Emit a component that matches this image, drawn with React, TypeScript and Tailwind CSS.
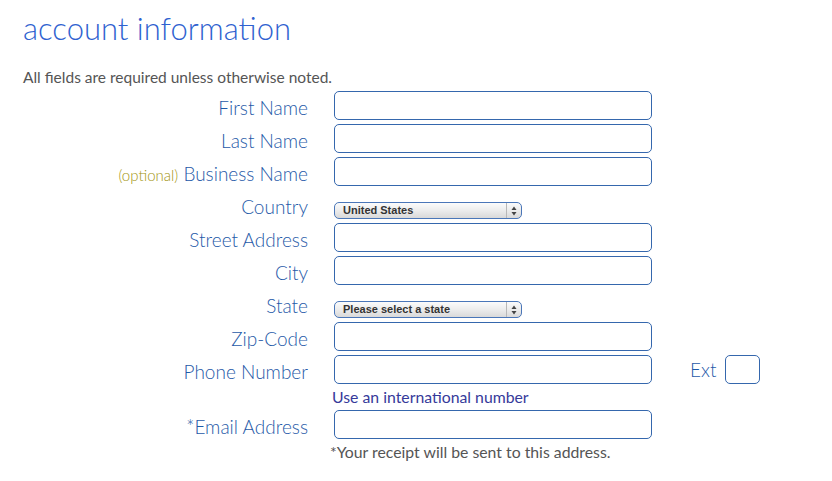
import React from "react";

const font = { fontFamily: "Lato, 'Open Sans', sans-serif" };

const Field = () => (
  <input
    type="text"
    className="w-[318px] h-[29px] rounded-[5px] border-[1.5px] border-[#3567ad] bg-white outline-none"
  />
);

const Select = ({ value }: { value: string }) => (
  <div className="relative w-[188px] h-[17px] rounded-[5px] border border-[#4a76b8] bg-gradient-to-b from-[#fbfbfb] via-[#ececec] to-[#d9d9d9] flex items-center">
    <span className="pl-[8px] text-[11px] font-bold text-[#333] leading-none" style={{ fontFamily: "'Liberation Sans', Arial, sans-serif" }}>
      {value}
    </span>
    <div className="absolute right-0 top-0 bottom-0 w-[15px] border-l border-[#b8b8b8] flex items-center justify-center">
      <svg width="6" height="10" viewBox="0 0 6 10">
        <path d="M3 0.5 L5.5 4 L0.5 4 Z" fill="#444" />
        <path d="M3 9.5 L5.5 6 L0.5 6 Z" fill="#444" />
      </svg>
    </div>
  </div>
);

const Label = ({ children }: { children: React.ReactNode }) => (
  <div className="w-[285px] text-right text-[19px] font-light text-[#1f5aa8] leading-[29px] pt-[2px]">{children}</div>
);

export default function App() {
  const rows = (label: React.ReactNode, control: React.ReactNode) => (
    <div className="flex h-[29px] gap-[26px]">
      <Label>{label}</Label>
      {control}
    </div>
  );

  return (
    <div className="bg-white w-[832px] h-[481px] pl-[23px] pt-[8px]" style={font}>
      <h1 className="text-[31px] font-light text-[#2f62d0] leading-[40px]">account information</h1>
      <p className="mt-[20px] text-[15.5px] text-[#555] leading-[18px]">All fields are required unless otherwise noted.</p>
      <div className="flex flex-col gap-[4px] mt-[5px]">
        {rows("First Name", <Field />)}
        {rows("Last Name", <Field />)}
        {rows(
          <>
            <span className="text-[15px] text-[#a39510]">(optional)</span> Business Name
          </>,
          <Field />
        )}
        <div className="flex h-[29px] gap-[26px] items-end">
          <div className="w-[285px] text-right text-[19px] font-light text-[#1f5aa8] leading-[29px] mb-[-2px]">Country</div>
          <div>
            <Select value="United States" />
          </div>
        </div>
        {rows("Street Address", <Field />)}
        {rows("City", <Field />)}
        <div className="flex h-[29px] gap-[26px] items-end">
          <div className="w-[285px] text-right text-[19px] font-light text-[#1f5aa8] leading-[29px] mb-[-2px]">State</div>
          <div>
            <Select value="Please select a state" />
          </div>
        </div>
        {rows("Zip-Code", <Field />)}
        <div className="flex h-[29px] gap-[26px]">
          <Label>Phone Number</Label>
          <Field />
          <div className="flex items-center gap-[9px] ml-[12px]">
            <span className="text-[19px] font-light text-[#1f5aa8] pt-[2px]">Ext</span>
            <input type="text" className="w-[35px] h-[29px] rounded-[5px] border-[1.5px] border-[#3567ad] bg-white outline-none" />
          </div>
        </div>
        <div className="pl-[309px] text-[15.8px] text-[#363a9a] leading-[18px]">Use an international number</div>
        <div className="flex h-[29px] gap-[26px]">
          <Label>*Email Address</Label>
          <Field />
        </div>
        <div className="pl-[307px] text-[15.8px] text-[#555] leading-[18px]">*Your receipt will be sent to this address.</div>
      </div>
    </div>
  );
}
